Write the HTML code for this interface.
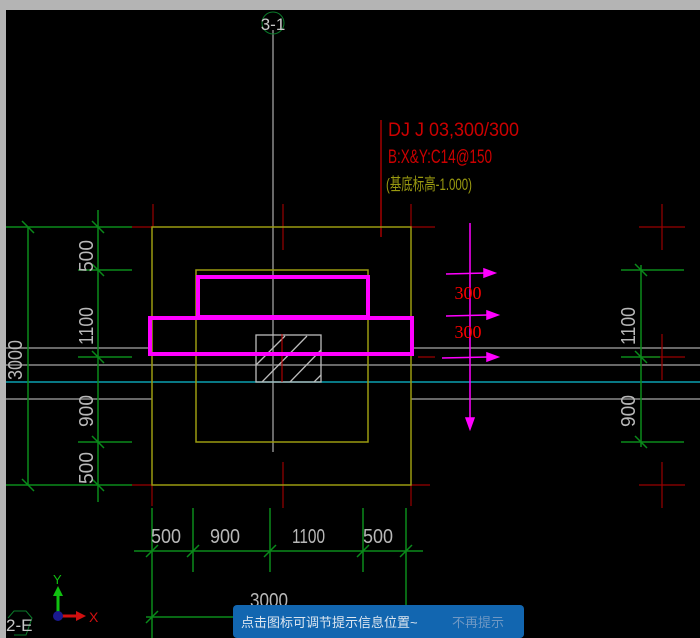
<!DOCTYPE html>
<html><head><meta charset="utf-8"><style>
html,body{margin:0;padding:0;background:#b4b4b4;width:700px;height:638px;overflow:hidden}
svg{display:block}
text{font-family:"Liberation Sans Narrow","Liberation Sans",sans-serif}
</style></head><body>
<svg width="700" height="638" viewBox="0 0 700 638" xmlns="http://www.w3.org/2000/svg">
<rect x="6" y="10" width="694" height="628" fill="#000"/>
<g stroke="#8a8a8a" stroke-width="1.5" fill="none">
<line x1="273" y1="30" x2="273" y2="452"/>
<line x1="6" y1="348" x2="150" y2="348"/><line x1="413" y1="348" x2="700" y2="348"/>
<line x1="6" y1="365" x2="700" y2="365"/>
<line x1="6" y1="399" x2="152" y2="399"/><line x1="411" y1="399" x2="700" y2="399"/>
</g>
<line x1="6" y1="382" x2="700" y2="382" stroke="#0aa0b0" stroke-width="1.5"/>
<circle cx="273" cy="23" r="11" stroke="#0a7a2a" fill="none"/>
<text x="273" y="30" fill="#c8c8c8" font-size="17" text-anchor="middle">3-1</text>
<g stroke="#900" stroke-width="1.2">
<line x1="153" y1="204" x2="153" y2="227"/><line x1="132" y1="227" x2="153" y2="227"/>
<line x1="283" y1="204" x2="283" y2="250"/>
<line x1="411" y1="204" x2="411" y2="227"/><line x1="411" y1="227" x2="435" y2="227"/>
<line x1="662" y1="204" x2="662" y2="250"/><line x1="639" y1="227" x2="685" y2="227"/>
<line x1="662" y1="334" x2="662" y2="380"/><line x1="639" y1="357" x2="685" y2="357"/>
<line x1="662" y1="462" x2="662" y2="508"/><line x1="639" y1="485" x2="685" y2="485"/>
<line x1="283" y1="462" x2="283" y2="508"/>
<line x1="132" y1="485" x2="152" y2="485"/><line x1="411" y1="485" x2="430" y2="485"/>
<line x1="152" y1="485" x2="152" y2="506"/><line x1="411" y1="485" x2="411" y2="506"/>
<line x1="418" y1="357" x2="435" y2="357"/>
<line x1="381" y1="120" x2="381" y2="237" stroke="#c00"/>
</g>
<g stroke="#9a9a10" stroke-width="1.5" fill="none">
<rect x="152" y="227" width="259" height="258"/>
<rect x="196" y="270" width="172" height="172"/>
</g>
<g stroke="#bbb" stroke-width="1.3" fill="none">
<rect x="256" y="335" width="65" height="47"/>
<path d="M256 365 L285 336 M262 382 L307 336 M290 382 L321 350 M314 382 L321 375"/>
</g>
<line x1="282" y1="334" x2="282" y2="382" stroke="#c00" stroke-width="1"/>
<g stroke="#f0f" stroke-width="4" fill="none">
<rect x="198" y="277" width="170" height="40"/>
<rect x="150" y="318" width="262" height="36"/>
</g>
<g stroke="#f0f" stroke-width="1.5" fill="#f0f">
<line x1="470" y1="223" x2="470" y2="420"/><path d="M466 418 L474 418 L470 429 Z"/>
<line x1="446" y1="274" x2="486" y2="273"/><path d="M484 269 L495 273 L484 277Z"/>
<line x1="446" y1="316" x2="488" y2="315"/><path d="M487 311 L498 315 L487 319Z"/>
<line x1="442" y1="358" x2="488" y2="357"/><path d="M487 353 L498 357 L487 361Z"/>
</g>
<text x="468" y="299" fill="#f00" font-size="18" text-anchor="middle" style="font-family:'Liberation Serif',serif">300</text>
<text x="468" y="338" fill="#f00" font-size="18" text-anchor="middle" style="font-family:'Liberation Serif',serif">300</text>
<text x="388" y="136" fill="#c00" font-size="19" textLength="131" lengthAdjust="spacingAndGlyphs">DJ J 03,300/300</text>
<text x="388" y="163" fill="#c00" font-size="19" textLength="104" lengthAdjust="spacingAndGlyphs">B:X&amp;Y:C14@150</text>
<text x="386" y="190" fill="#9a9a10" font-size="17" style="font-family:'Liberation Sans','Noto Sans CJK SC',sans-serif" textLength="86" lengthAdjust="spacingAndGlyphs">(基底标高-1.000)</text>
<g stroke="#0a8a1a" stroke-width="1.5">
<line x1="6" y1="227" x2="132" y2="227"/><line x1="28" y1="227" x2="28" y2="485"/>
<line x1="98" y1="210" x2="98" y2="502"/>
<line x1="78" y1="270" x2="132" y2="270"/><line x1="78" y1="357" x2="132" y2="357"/><line x1="78" y1="442" x2="132" y2="442"/>
<line x1="6" y1="485" x2="132" y2="485"/>
<line x1="621" y1="270" x2="684" y2="270"/><line x1="641" y1="265" x2="641" y2="447"/>
<line x1="621" y1="357" x2="660" y2="357"/><line x1="621" y1="442" x2="684" y2="442"/>
<line x1="134" y1="551" x2="423" y2="551"/>
<line x1="152" y1="508" x2="152" y2="638"/><line x1="193" y1="508" x2="193" y2="572"/>
<line x1="270" y1="508" x2="270" y2="572"/><line x1="363" y1="508" x2="363" y2="572"/>
<line x1="406" y1="508" x2="406" y2="638"/>
<line x1="146" y1="617" x2="240" y2="617"/>
<path d="M22 221 L34 233 M92 221 L104 233 M92 264 L104 276 M92 351 L104 363 M92 436 L104 448 M92 479 L104 491 M22 479 L34 491 M635 264 L647 276 M635 351 L647 363 M635 436 L647 448 M146 557 L158 545 M187 557 L199 545 M264 557 L276 545 M357 557 L369 545 M400 557 L412 545 M146 623 L158 611"/>
</g>
<g fill="#b8b8b8" font-size="20">
<text transform="translate(93,272) rotate(-90)" textLength="32" lengthAdjust="spacingAndGlyphs">500</text>
<text transform="translate(93,345) rotate(-90)" textLength="38" lengthAdjust="spacingAndGlyphs">1100</text>
<text transform="translate(93,427) rotate(-90)" textLength="32" lengthAdjust="spacingAndGlyphs">900</text>
<text transform="translate(93,484) rotate(-90)" textLength="32" lengthAdjust="spacingAndGlyphs">500</text>
<text transform="translate(22,380) rotate(-90)" textLength="40" lengthAdjust="spacingAndGlyphs">3000</text>
<text transform="translate(635,345) rotate(-90)" textLength="38" lengthAdjust="spacingAndGlyphs">1100</text>
<text transform="translate(635,427) rotate(-90)" textLength="32" lengthAdjust="spacingAndGlyphs">900</text>
<text x="151" y="543" textLength="30" lengthAdjust="spacingAndGlyphs">500</text>
<text x="210" y="543" textLength="30" lengthAdjust="spacingAndGlyphs">900</text>
<text x="292" y="543" textLength="33" lengthAdjust="spacingAndGlyphs">1100</text>
<text x="363" y="543" textLength="30" lengthAdjust="spacingAndGlyphs">500</text>
<text x="250" y="607" textLength="38" lengthAdjust="spacingAndGlyphs">3000</text>
</g>
<line x1="58" y1="615" x2="58" y2="594" stroke="#10c010" stroke-width="3"/>
<path d="M53 596 L58 586 L63 596Z" fill="#10c010"/>
<text x="53" y="584" fill="#10c010" font-size="13">Y</text>
<line x1="58" y1="616" x2="78" y2="616" stroke="#d01010" stroke-width="3"/>
<path d="M76 611 L86 616 L76 621Z" fill="#d01010"/>
<text x="89" y="622" fill="#d01010" font-size="14">X</text>
<circle cx="58" cy="616" r="5" fill="#1a1a90"/>
<path d="M8 618 L14 611 L26 611 L32 618 L26 635 L14 635" stroke="#0a7a2a" fill="none"/>
<text x="6" y="631" fill="#c8c8c8" font-size="17">2-E</text>
<rect x="233" y="605" width="291" height="33" rx="4" fill="#1266b0"/>
<text x="241" y="627" fill="#dce6f0" font-size="13" style="font-family:'Liberation Sans','Noto Sans CJK SC',sans-serif">点击图标可调节提示信息位置~</text>
<text x="452" y="627" fill="#6f98c4" font-size="13" style="font-family:'Liberation Sans','Noto Sans CJK SC',sans-serif">不再提示</text>
</svg>
</body></html>
